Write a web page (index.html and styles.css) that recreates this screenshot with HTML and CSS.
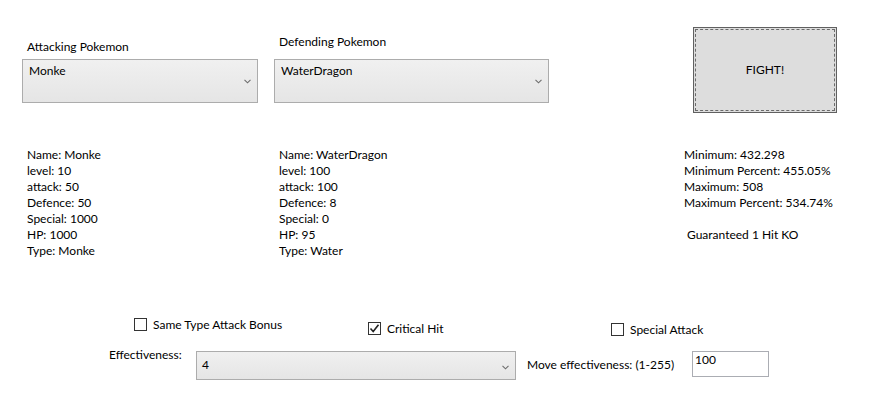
FILE: index.html
```html
<!DOCTYPE html>
<html>
<head>
<meta charset="utf-8">
<link rel="stylesheet" href="styles.css">
</head>
<body>
<div class="app">
  <div class="top">
    <div class="picker picker-a">
      <div class="lbl">Attacking Pokemon</div>
      <div class="combo combo-tall">
        <span class="combo-text">Monke</span>
        <svg class="chev" width="7" height="5" viewBox="0 0 7 5"><path d="M0.5 0.8 L3.5 3.8 L6.5 0.8" fill="none" stroke="#6d6d6d" stroke-width="1.1"/></svg>
      </div>
    </div>
    <div class="picker picker-d">
      <div class="lbl">Defending Pokemon</div>
      <div class="combo combo-tall">
        <span class="combo-text">WaterDragon</span>
        <svg class="chev" width="7" height="5" viewBox="0 0 7 5"><path d="M0.5 0.8 L3.5 3.8 L6.5 0.8" fill="none" stroke="#6d6d6d" stroke-width="1.1"/></svg>
      </div>
    </div>
    <button class="fight"><span class="fight-inner">FIGHT!</span></button>
  </div>

  <div class="stats">
    <div class="col col-a">
      <div>Name: Monke</div>
      <div>level: 10</div>
      <div>attack: 50</div>
      <div>Defence: 50</div>
      <div>Special: 1000</div>
      <div>HP: 1000</div>
      <div>Type: Monke</div>
    </div>
    <div class="col col-d">
      <div>Name: WaterDragon</div>
      <div>level: 100</div>
      <div>attack: 100</div>
      <div>Defence: 8</div>
      <div>Special: 0</div>
      <div>HP: 95</div>
      <div>Type: Water</div>
    </div>
    <div class="col col-r">
      <div>Minimum: 432.298</div>
      <div>Minimum Percent: 455.05%</div>
      <div>Maximum: 508</div>
      <div>Maximum Percent: 534.74%</div>
      <div class="ko">Guaranteed 1 Hit KO</div>
    </div>
  </div>

  <div class="checks">
    <label class="check check-stab"><span class="box"></span><span>Same Type Attack Bonus</span></label>
    <label class="check check-crit"><span class="box"><svg width="11" height="11" viewBox="0 0 11 11"><path d="M1.5 5.5 L4.2 8.5 L9.5 1.8" fill="none" stroke="#222" stroke-width="1.6"/></svg></span><span>Critical Hit</span></label>
    <label class="check check-spec"><span class="box"></span><span>Special Attack</span></label>
  </div>

  <div class="bottom">
    <div class="eff-lbl">Effectiveness:</div>
    <div class="combo combo-short">
      <span class="combo-text">4</span>
      <svg class="chev" width="7" height="5" viewBox="0 0 7 5"><path d="M0.5 0.8 L3.5 3.8 L6.5 0.8" fill="none" stroke="#6d6d6d" stroke-width="1.1"/></svg>
    </div>
    <div class="move-lbl">Move effectiveness: (1-255)</div>
    <div class="textbox">100</div>
  </div>
</div>
</body>
</html>
```

FILE: styles.css
```css
* { box-sizing: border-box; }
html, body { margin: 0; padding: 0; background: #ffffff; }
body {
  font-family: "Segoe UI", Lato, "Noto Sans", sans-serif;
  font-size: 12px;
  line-height: 16px;
  color: #000;
  width: 872px;
  height: 407px;
  overflow: hidden;
}

.top {
  display: flex;
  align-items: flex-start;
  padding-left: 22px;
  height: 147px;
}
.picker-a { width: 236px; padding-top: 39px; }
.picker-a .lbl { padding-left: 5px; margin-bottom: 4px; }
.picker-d { width: 275px; margin-left: 16px; padding-top: 34px; }
.picker-d .lbl { padding-left: 5px; margin-bottom: 9px; }

.combo {
  display: flex;
  border: 1px solid #acacac;
  background: linear-gradient(#f0f0f0, #e5e5e5);
  padding: 3px 6px 0 6px;
}
.combo-tall { height: 44px; }
.combo-short { height: 29px; width: 320px; margin-top: 4px; padding-top: 5px; padding-left: 5px; }
.combo-text { flex: 1; }
.chev { align-self: center; margin-top: -2px; }

.fight {
  margin-left: 144px;
  margin-top: 27px;
  width: 144px;
  height: 86px;
  border: 1px solid #606060;
  background: #dddddd;
  padding: 1px;
  font: inherit;
  color: #000;
  display: flex;
}
.fight-inner {
  flex: 1;
  border: 1px dashed #6a6a6a;
  display: flex;
  align-items: center;
  justify-content: center;
}

.stats {
  display: flex;
  padding-left: 27px;
  height: 171px;
}
.col-a { width: 252px; }
.col-d { width: 405px; }
.ko { margin-top: 16px; padding-left: 3px; }

.checks {
  display: grid;
  grid-template-columns: 234px 243px auto;
  padding-left: 134px;
  height: 29px;
  align-items: start;
}
.check { display: flex; align-items: center; gap: 6px; height: 13px; }
.check-crit { margin-top: 4px; }
.check-spec { margin-top: 5px; }
.box {
  width: 13px;
  height: 13px;
  border: 1px solid #333333;
  background: #fff;
  display: flex;
  align-items: center;
  justify-content: center;
}

.bottom {
  display: flex;
  align-items: flex-start;
  padding-left: 109px;
}
.eff-lbl { width: 87px; }
.move-lbl { margin-left: 11px; width: 165px; margin-top: 10px; }
.textbox {
  margin-top: 4px;
  width: 77px;
  height: 26px;
  border: 1px solid #abadb3;
  padding: 0 0 0 2px;
  background: #fff;
}
```
